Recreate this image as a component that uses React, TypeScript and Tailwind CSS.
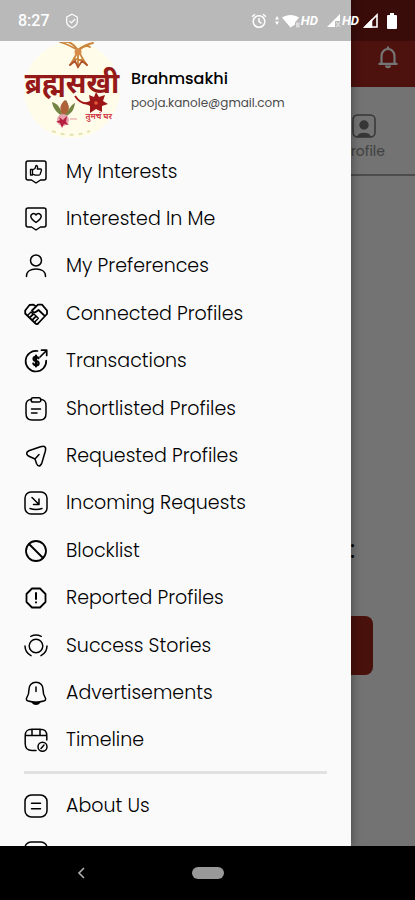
import React from 'react';

interface MenuItem {
    label: string;
    icon: React.ReactNode;
}

interface MenuRowProps {
    item: MenuItem;
}

// 24px line icon, shared by the drawer entries
const Icon: React.FC<{ children: React.ReactNode }> = ({ children }) => (
    <svg
        viewBox="0 0 24 24"
        className="size-6 shrink-0"
        fill="none"
        stroke="currentColor"
        strokeWidth="1.5"
        strokeLinecap="round"
        strokeLinejoin="round"
        aria-hidden="true"
    >
        {children}
    </svg>
);

const bubble = 'M4 1h16a2 2 0 0 1 2 2v15a2 2 0 0 1-2 2h-3.500L12 23 7.500 20H4a2 2 0 0 1-2-2V3a2 2 0 0 1 2-2Z';

const mainItems: MenuItem[] = [
    {
        label: 'My Interests',
        icon: (
            <Icon>
                <path d={bubble} />
                <path d="M6.500 9.500h2V15h-2zM8.500 10l2.500-1.500 1-3c2 0 1.700 1.800 1.300 3.500h3.200c1 0 1.100 1 .8 1.800l-1.200 3.500c-.3.700-.8.900-1.500.900h-3.500L8.500 14" strokeWidth="1.300" />
            </Icon>
        ),
    },
    {
        label: 'Interested In Me',
        icon: (
            <Icon>
                <path d={bubble} />
                <path d="M12 15.500C9 13.500 6.800 12 6.800 9.300 6.800 6.600 10.300 5.500 12 8c1.700-2.500 5.200-1.400 5.200 1.300 0 2.700-2.200 4.200-5.200 6.200Z" />
            </Icon>
        ),
    },
    {
        label: 'My Preferences',
        icon: (
            <Icon>
                <circle cx="12" cy="6.500" r="5.500" />
                <path d="M2.500 22.500V22c0-4.500 4-7 9.500-7s9.500 2.500 9.500 7v.5" />
            </Icon>
        ),
    },
    {
        label: 'Connected Profiles',
        icon: (
            <Icon>
                <path d="M12 4.500 9.500 2.700 5.500 3 1.200 8.500v3L11.500 21.500c1 1 2.500.5 3-.5L23 12V8.500L18 2.700h-4L8 8.500c.5 2.500 3 2.300 4.500 1l2-1.500 6.500 6.200" strokeWidth="1.800" />
                <path d="m4 13 3-3 2 2-3 3m.500 0L10 12l2 2-3.500 3.500m.5 0 3.300-3.300 2 2L11 19.700" strokeWidth="1.400" />
            </Icon>
        ),
    },
    {
        label: 'Transactions',
        icon: (
            <Icon>
                <path d="M13.500 2A10.300 10.300 0 1 0 22.200 11.500M16 8l6.500-6.500M17.500 1.200h5.200v5.200" strokeWidth="1.700" />
                <path d="M14.500 9.200c-.5-1-1.300-1.400-2.500-1.400-3.300 0-3.300 4 0 4.200 3.500.2 3.500 4.300 0 4.300-1.300 0-2.300-.6-2.700-1.700M12 6.500v11" strokeWidth="2.200" />
            </Icon>
        ),
    },
    {
        label: 'Shortlisted Profiles',
        icon: (
            <Icon>
                <path d="M7.500 2.500C3.500 2.700 2 4 2 8.500v8C2 21.500 4 23 8 23h8c4 0 6-1.500 6-6.500v-8c0-4.500-1.500-5.800-5.500-6" />
                <path d="M9 .8h6a1.800 1.800 0 0 1 1.800 1.800v.6A1.800 1.800 0 0 1 15 5H9a1.800 1.800 0 0 1-1.800-1.800v-.6A1.800 1.800 0 0 1 9 .8ZM7.500 12h9M7.500 16H13" />
            </Icon>
        ),
    },
    {
        label: 'Requested Profiles',
        icon: (
            <Icon>
                <path d="M5.500 6.500 16.500 2.800c4-1.300 6-.2 4.800 4.500L18 18.500c-1.500 4.500-4 4.500-5.500 1L11 15l-5.500-2.500C1.800 11 1.800 8 5.500 6.500ZM11 15l4-4.500" />
            </Icon>
        ),
    },
    {
        label: 'Incoming Requests',
        icon: (
            <Icon>
                <rect x="1" y="1" width="22" height="22" rx="6" />
                <path d="m8 6.500 6.800 6.800M15 8v5.500H9.500M6 17.500c4 1.400 8 1.400 12 0" />
            </Icon>
        ),
    },
    {
        label: 'Blocklist',
        icon: (
            <Icon>
                <circle cx="12" cy="12" r="10" strokeWidth="1.800" />
                <path d="m5 5 14 14" strokeWidth="1.800" />
            </Icon>
        ),
    },
    {
        label: 'Reported Profiles',
        icon: (
            <Icon>
                <path d="M8 2.500h8L21.500 8v8L16 21.500H8L2.500 16V8Z" strokeWidth="1.800" />
                <path d="M12 7v6M12 16.300v.2" strokeWidth="2" />
            </Icon>
        ),
    },
    {
        label: 'Success Stories',
        icon: (
            <Icon>
                <circle cx="12" cy="12" r="6.800" />
                <path d="M6.800 2.300a11 11 0 0 1 10.400 0M1 12a11 11 0 0 0 6 9.600M23 12a11 11 0 0 1-6 9.600" />
            </Icon>
        ),
    },
    {
        label: 'Advertisements',
        icon: (
            <Icon>
                <path d="M12 1.200c-4.200 0-7 3-7 7 0 5-.5 6-2.200 8.500-1 1.700-.2 2.800 1.500 3.300 5 1.500 10.400 1.500 15.400 0 1.700-.5 2.500-1.600 1.500-3.300C19.500 14.200 19 13.200 19 8.200c0-4-2.800-7-7-7ZM12 6v4.500" />
                <path d="M8.500 21.500c1.500 2.200 5.500 2.200 7 0Z" fill="currentColor" />
            </Icon>
        ),
    },
    {
        label: 'Timeline',
        icon: (
            <Icon>
                <path d="M22.800 12V8c0-5-2-6.800-7-6.800H8C3 1.200 1.200 3 1.200 8v7.500c0 5 1.800 7 6.800 7h4M1.800 7.500h20.500M8 1.500v6M16 1.500v6" />
                <circle cx="18.500" cy="18.800" r="4.500" />
                <path d="m17 20.500 3-3.500" />
            </Icon>
        ),
    },
];

const infoItems: MenuItem[] = [
    {
        label: 'About Us',
        icon: (
            <Icon>
                <rect x="1" y="1" width="22" height="22" rx="6.500" />
                <path d="M7.500 9.300h9M7.500 14.700h9" />
            </Icon>
        ),
    },
];

const MenuRow: React.FC<MenuRowProps> = ({ item }) => (
    <li className="flex">
        <a href="#" className="flex w-full items-center gap-[18px] px-6 text-[19px] font-light leading-6 text-black">
            {item.icon}
            <span>{item.label}</span>
        </a>
    </li>
);

const StatusBar: React.FC = () => (
    <div className="absolute inset-x-0 top-0 z-30 flex h-[41px] items-center justify-between bg-black/26 px-[18px] text-white">
        <div className="flex items-center gap-[14px]">
            <span className="font-[Roboto] text-[16px] font-medium leading-5">8:27</span>
            <svg viewBox="0 0 16 16" className="size-4" fill="none" stroke="currentColor" strokeWidth="1.200" aria-hidden="true">
                <path d="M8 1.200 10.500 2.500 13.300 4v4.500c0 3-2.300 5-5.300 6.300-3-1.300-5.300-3.300-5.300-6.300V4L5.500 2.500Z" />
                <path d="M5.500 7.800 7.500 9.800 11 6" />
            </svg>
        </div>
        <div className="flex items-center font-[Roboto] text-[13px] font-bold italic leading-5">
            <svg viewBox="0 0 16 16" className="mr-2 size-4" fill="none" stroke="currentColor" strokeWidth="1.500" aria-hidden="true">
                <circle cx="8" cy="8.500" r="5.800" />
                <path d="M8 5v3.500l2.500 1.800M1 3.800 4 1.200M15 3.800l-3-2.600" />
            </svg>
            <svg viewBox="0 0 26 16" className="h-4 w-[26px]" fill="currentColor" aria-hidden="true">
                <path d="m2 3 2 3.500H0ZM2 12 0 8.500h4Z" />
                <path d="M7 4.500c5-3.500 12-3.500 17 0l-4 5v2l-4.500 3Z" />
                <path d="M21 9.500h3.500v5H21z" opacity=".5" />
            </svg>
            <span>HD</span>
            <svg viewBox="0 0 16 16" className="ml-2 size-4" fill="currentColor" aria-hidden="true">
                <path d="M1 14 14 1v7H9v6Z" />
                <path d="m10 9 4 5m0-5-4 5" stroke="currentColor" strokeWidth="1.200" opacity=".6" />
            </svg>
            <span>HD</span>
            <svg viewBox="0 0 16 16" className="ml-1 size-4" fill="none" stroke="currentColor" strokeWidth="1.600" aria-hidden="true">
                <path d="M2 14 14 2v12Z" />
                <path d="m2 14 6.500-6.500V14Z" fill="currentColor" />
            </svg>
            <svg viewBox="0 0 10 16" className="ml-2 h-4 w-[10px]" fill="currentColor" aria-hidden="true">
                <path d="M3 0h4v2h2a1 1 0 0 1 1 1v12a1 1 0 0 1-1 1H1a1 1 0 0 1-1-1V3a1 1 0 0 1 1-1h2Z" />
            </svg>
        </div>
    </div>
);

// Round brand badge: gold ornament, wordmark, kalash and tagline
const BrandLogo: React.FC = () => (
    <div className="relative flex h-24 w-24 shrink-0 flex-col items-center">
        <svg viewBox="0 0 96 96" className="absolute inset-0 size-24" fill="none" aria-hidden="true">
            <circle cx="48" cy="48" r="48" fill="#fffdea" />
            <g stroke="#c9853c" strokeWidth="1.800" strokeLinecap="round">
                <path d="M36 0c7 2 12 5 18 8 5-4 9-6 15-7M54 8C50 2 44-1 41 0M54 9c5-5 9-6 12-4" />
                <path d="M54 9c-3 6-5 10-8 14M54 9v16M55 9c2 6 5 10 8 14M50 17l8 1" />
                <path d="M46 23l5-4 3 6 4-6 5 4" stroke="#b0522a" />
            </g>
            <circle cx="54" cy="10" r="3.500" fill="#d78b4b" />
            <path d="M51 54c6 9 14 9 22 4" stroke="#a51916" strokeWidth="2" />
            <path d="m72 50 3 5 6-2-2 6 5 3-6 2 0 6-6-3-6 4v-7l-6-3 6-2-1-6 5 2Z" fill="#9c1517" />
            <circle cx="72" cy="61" r="1.800" fill="#e3583c" />
            <path d="M38 74C32 70 29 66 28 60c6 2 8 5 10 12 0-7 1-11 4-14 3 5 3 9 0 14 3-5 6-10 9-11-1 7-4 11-9 13Z" fill="#758343" />
            <path d="M38 72c-3-5-2-10 3-14 5 5 5 10 1 14Z" fill="#ad6239" />
            <circle cx="39" cy="78" r="6" fill="#e7a2ad" />
            <path d="m35 75 4 3 4-4-1 6 3 3-5-1-2 4-2-5-4-1 4-2Z" fill="#b62142" />
            <path d="M46 77h7" stroke="#e5949c" strokeWidth="1" />
            <g stroke="#e4e3b0" strokeWidth="2" strokeDasharray="4 5">
                <path d="M28 89c13 5 26 5 38 0" />
            </g>
        </svg>
        <span className="relative mt-5 whitespace-nowrap font-['Noto_Sans','Noto_Sans_Devanagari',sans-serif] text-[28px] font-bold leading-10 text-[#96191a]">
            ब्रह्मसखी
        </span>
        <span className="relative mt-2 self-end whitespace-nowrap pr-2 font-['Noto_Sans','Noto_Sans_Devanagari',sans-serif] text-[8px] font-bold leading-3 text-[#d2434d]">
            तुमचं घर
        </span>
    </div>
);

const HomeScreen: React.FC = () => (
    <main className="absolute inset-0 bg-[#fafafa]">
        <header className="flex h-[87px] items-end justify-end bg-[#a92520] px-[15px] pb-[18px]">
            <button type="button" aria-label="Notifications" className="text-white">
                <svg viewBox="0 0 24 24" className="size-6" fill="none" stroke="currentColor" strokeWidth="2.200" aria-hidden="true">
                    <path d="M5.500 18.500V11c0-4 3-7 6.500-7s6.500 3 6.500 7v7.500M2.500 18.800h19M12 4V1.500" />
                    <path d="M9 20.500h6c0 1.800-1.200 2.800-3 2.800s-3-1-3-2.800Z" fill="currentColor" stroke="none" />
                </svg>
            </button>
        </header>
        <div className="flex h-[89px] justify-end border-b-2 border-[#a5a5a5] pr-[30px] pt-[27px]">
            <a href="#" className="flex flex-col items-center gap-px text-sm leading-6 text-[#8c8c8c]">
                <svg viewBox="0 0 24 24" className="size-6" fill="none" stroke="#777777" strokeWidth="1.500" aria-hidden="true">
                    <rect x="1" y="1" width="22" height="22" rx="4.500" />
                    <circle cx="12" cy="11" r="4" fill="#777777" />
                    <path d="M6 22.500c1.500-4 10.500-4 12 0Z" fill="#777777" />
                </svg>
                Profile
            </a>
        </div>
        <div className="flex flex-col px-[42px] pt-[360px]">
            <span className="self-end pr-[18px] text-2xl leading-7 text-black">:</span>
            <button type="button" aria-label="Continue" className="mt-[52px] h-[59px] rounded-lg bg-[#a0251c]" />
        </div>
    </main>
);

const Drawer: React.FC = () => (
    <aside className="absolute inset-y-0 left-0 z-20 w-[351px] max-w-[85%] overflow-hidden bg-[#fafafa] shadow-[2px_0_8px_rgba(0,0,0,0.3)]">
        <div className="flex items-start gap-[11px] pl-6 pt-[42px]">
            <BrandLogo />
            <div className="pt-[25px]">
                <h1 className="text-base font-medium leading-6 text-black">Brahmsakhi</h1>
                <p className="text-xs leading-6 text-[#4b4b4b]">pooja.kanole@gmail.com</p>
            </div>
        </div>
        <nav className="pt-[10px]">
            <ul className="grid min-h-[616px] auto-rows-fr">
                {mainItems.map((item) => (
                    <MenuRow key={item.label} item={item} />
                ))}
            </ul>
            <hr className="mx-6 mt-[7px] border-t-[3px] border-[#e1e1e1]" />
            <ul className="grid auto-rows-[47px] pt-2">
                {infoItems.map((item) => (
                    <MenuRow key={item.label} item={item} />
                ))}
                <li className="px-6 pt-3">
                    <Icon>
                        <rect x="1" y="1" width="22" height="22" rx="6" />
                    </Icon>
                </li>
            </ul>
        </nav>
    </aside>
);

const NavigationBar: React.FC = () => (
    <div className="z-30 grid h-[54px] shrink-0 grid-cols-5 items-center justify-items-center bg-black">
        <button type="button" aria-label="Back" className="col-start-1 col-end-3 pr-1 text-[#b0b0b0]">
            <svg viewBox="0 0 8 12" className="h-3 w-2" fill="none" stroke="currentColor" strokeWidth="1.600" aria-hidden="true">
                <path d="M7 1 2 6l5 5" />
            </svg>
        </button>
        <button type="button" aria-label="Home" className="h-3 w-8 rounded-full bg-[#999999]" />
    </div>
);

export default function App() {
    return (
        <div className="flex h-screen flex-col overflow-hidden bg-black font-['Poppins','Inter',sans-serif]">
            <div className="relative flex-1 overflow-hidden">
                <HomeScreen />
                <div className="absolute inset-0 z-10 bg-black/54" />
                <Drawer />
                <StatusBar />
            </div>
            <NavigationBar />
        </div>
    );
}
